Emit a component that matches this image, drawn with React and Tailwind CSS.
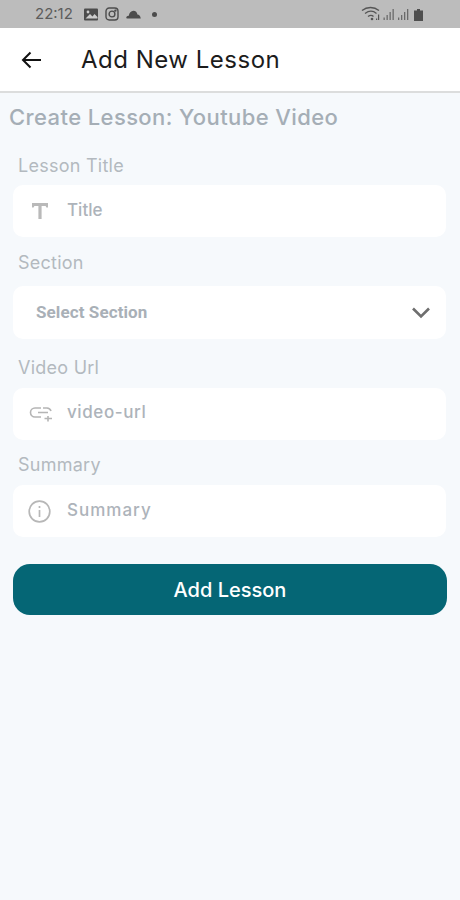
import React from "react";

function Label({ children, cls }) {
  return <div className={"pl-[18px] text-[18px] leading-[26px] tracking-[0.25px] text-[#b3b9bf] " + cls}>{children}</div>;
}

function Field({ icon, text, cls, track }) {
  return (
    <div className={"mx-[13px] h-[52px] w-[433px] rounded-[10px] bg-white flex items-center " + cls}>
      <div className="w-[54px] flex justify-center">{icon}</div>
      <span className={"text-[17px] font-medium text-[#adb3ba] " + track}>{text}</span>
    </div>
  );
}

export default function App() {
  return (
    <div className="w-[460px] h-[900px] bg-[#f6f9fc] overflow-hidden font-['Inter',sans-serif]">
      <div className="h-[28px] bg-[#bcbcbc] flex items-center justify-between pl-[35px] pr-[33px]">
        <div className="flex items-center">
          <span className="text-[15px] text-[#5c5c5c] w-[49px]">22:12</span>
          <svg width="15" height="13" viewBox="0 0 15 13"><rect width="14" height="12" y="0.5" rx="1" fill="#4c4c4c"/><circle cx="4" cy="4" r="1.4" fill="#ccc"/><path d="M1.5 10.5L6 6l2.5 2.5L10.5 6l3 3v1.5z" fill="#ccc"/></svg>
          <svg width="14" height="14" viewBox="0 0 14 14" className="ml-[6px]" fill="none" stroke="#4c4c4c" strokeWidth="1.4"><rect x="1" y="1" width="12" height="12" rx="3.2"/><circle cx="7" cy="7" r="2.9"/><circle cx="10.4" cy="3.6" r="0.5" fill="#4c4c4c"/></svg>
          <svg width="15" height="9" viewBox="0 0 15 9" className="ml-[7px]"><path d="M1 8.5C.2 8.5 0 7 .8 6.4 1.2 6 2 5.7 2.8 5.8 3.2 3 5 .8 7.4.8c2.3 0 3.7 1.7 4 3.6 1.6 0 3 1.2 3.4 4.1z" fill="#4c4c4c"/></svg>
          <div className="ml-[11px] h-[5px] w-[5px] rounded-full bg-[#4c4c4c]" />
        </div>
        <svg width="66" height="16" viewBox="0 0 66 16" fill="none">
          <path d="M1 4.5C6 .5 13 .5 18 4.5M4 7.5C8 4.5 12 4.5 15.5 7.5M7 10.5c2-1.5 4-1.5 5.5 0" stroke="#555" strokeWidth="1.3"/>
          <circle cx="11" cy="13" r="1.3" fill="#555"/>
          <path d="M15 12.5h1.2v1.5H15zM17 8.5h1.2v5.5H17z" fill="#555"/>
          <path d="M22.5 11.5h1.3V14h-1.3zM25.5 9h1.3v5h-1.3zM28.5 6h1.3v8h-1.3zM31.5 3h1.3v11h-1.3z" fill="#6a6a6a"/>
          <path d="M37 11.5h1.3V14H37zM40 9h1.3v5H40zM43 6h1.3v8H43zM46 3h1.3v11H46z" fill="#6a6a6a"/>
          <path d="M53 4.5h3V3h3v1.5h3V15h-9z" fill="#4f4f4f"/>
        </svg>
      </div>

      <div className="h-[65px] bg-white border-b-2 border-[#dcdddd] flex items-center pl-[21px]">
        <svg width="20" height="18" viewBox="0 0 20 18" fill="none" stroke="#111" strokeWidth="2"><path d="M20 9H2M9.5 1.5L2 9l7.5 7.5"/></svg>
        <span className="ml-[40px] text-[24px] text-[#1c1c1c] tracking-[0.5px]">Add New Lesson</span>
      </div>

      <div className="pl-[9px] mt-[9px] text-[22px] leading-[30px] font-medium tracking-[0.4px] text-[#a5aeb6]">Create Lesson: Youtube Video</div>

      <Label cls="mt-[21px]">Lesson Title</Label>
      <Field
        cls="mt-[6px]"
        text="Title"
        icon={<svg width="16" height="16" viewBox="0 0 16 16" className="ml-[-1px]"><path d="M0 0h16v4.5h-1.6L13.6 3H9.6v13H6.4V3H2.4L1.6 4.5H0z" fill="#b9b9b9"/></svg>}
      />

      <Label cls="mt-[13px]">Section</Label>
      <div className="mx-[13px] mt-[10px] h-[53px] w-[433px] rounded-[10px] bg-white flex items-center justify-between pl-[23px] pr-[16px]">
        <span className="text-[17px] font-bold text-[#a9b0b7] font-['Roboto',sans-serif] tracking-[0.1px]">Select Section</span>
        <svg width="18" height="12" viewBox="0 0 18 12" fill="none" stroke="#6e6e6e" strokeWidth="2.6"><path d="M1 1.5l8 8 8-8"/></svg>
      </div>

      <Label cls="mt-[16px]">Video Url</Label>
      <Field
        cls="mt-[7px]"
        track="tracking-[0.6px] -mt-[2px]"
        text="video-url"
        icon={<svg width="24" height="16" viewBox="0 0 24 16" fill="none" stroke="#b5b5b5" strokeWidth="1.6" className="ml-[1px]"><path d="M12 2H6a4.5 4.5 0 0 0 0 9h6M9 6.5h10M14 2h4a4.5 4.5 0 0 1 4 3M19 10v5.5M15.5 12.5H23"/></svg>}
      />

      <Label cls="mt-[12px]">Summary</Label>
      <Field
        cls="mt-[7px]"
        track="tracking-[1px] -mt-[1px]"
        text="Summary"
        icon={<svg width="23" height="23" viewBox="0 0 23 23" fill="none" stroke="#b7b7b7" strokeWidth="1.7" className="ml-[-1px]"><circle cx="11.5" cy="11.5" r="10.3"/><path d="M11.5 10v7M11.5 6v2"/></svg>}
      />

      <button className="mx-[13px] mt-[27px] h-[51px] w-[434px] rounded-[17px] bg-[#056675] text-white text-[20px] font-medium">Add Lesson</button>
    </div>
  );
}
